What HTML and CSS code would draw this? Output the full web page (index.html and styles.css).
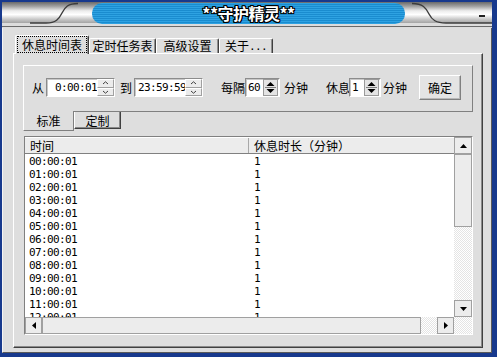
FILE: index.html
```html
<!DOCTYPE html>
<html>
<head>
<meta charset="utf-8">
<link rel="stylesheet" href="styles.css">
</head>
<body>
<div class="window">
  <div class="titlebar">
    <svg class="title-art" width="497" height="28" viewBox="0 0 497 28">
      <defs>
        <linearGradient id="metal" x1="0" y1="0" x2="0" y2="1">
          <stop offset="0" stop-color="#6a6a6a"/>
          <stop offset="0.22" stop-color="#a6a6a6"/>
          <stop offset="0.42" stop-color="#ececec"/>
          <stop offset="0.6" stop-color="#ffffff"/>
          <stop offset="0.82" stop-color="#c8c8c8"/>
          <stop offset="1" stop-color="#a4a4a4"/>
        </linearGradient>
        <pattern id="stripes" width="4" height="2" patternUnits="userSpaceOnUse">
          <rect width="4" height="1" fill="#1a8ccf"/>
          <rect y="1" width="4" height="1" fill="#2ea2e2"/>
        </pattern>
      </defs>
      <rect width="497" height="28" fill="#dcdcdc"/>
      <rect x="0" y="2" width="497" height="21" fill="url(#metal)"/>
      <rect x="0" y="26" width="497" height="1" fill="#6a6a6a"/>
      <rect x="92" y="3" width="313" height="21" rx="10" ry="10" fill="url(#stripes)"/>
      <path d="M30,23 L46,23 C56,23 59,19 62,13 C65,7 68,3.5 78,3.5" fill="none" stroke="#3c3c3c" stroke-width="1.4"/>
      <path d="M412,3.5 C423,3.5 426,8 429,14 C432,20 436,23 446,23 L492,23" fill="none" stroke="#3c3c3c" stroke-width="1.4"/>
      <rect x="479" y="15" width="6" height="2" fill="#202020"/>
      <rect x="0" y="0" width="497" height="2" fill="#17398d"/>
      <rect x="0" y="0" width="2" height="28" fill="#17398d"/>
      <rect x="492" y="0" width="5" height="28" fill="#17398d"/>
    </svg>
    <span class="title-text">**守护精灵**</span>
  </div>
  <div class="client">
    <div class="tabs">
      <div class="tab active w1"><span class="focus">休息时间表</span></div>
      <div class="tab w2">定时任务表</div>
      <div class="tab w3">高级设置</div>
      <div class="tab w4">关于<span class="mono">...</span></div>
    </div>
    <div class="panel">
      <div class="settings">
        <span class="lbl">从</span>
        <div class="edit e1">
          <span class="val right mono">0:00:01</span>
          <div class="updown">
            <span class="ud"><svg width="7" height="4" viewBox="0 0 7 4"><polyline points="1,3 3.5,0.8 6,3" fill="none" stroke="#404040" stroke-width="1"/></svg></span>
            <span class="ud"><svg width="7" height="4" viewBox="0 0 7 4"><polyline points="1,1 3.5,3.2 6,1" fill="none" stroke="#404040" stroke-width="1"/></svg></span>
          </div>
        </div>
        <span class="lbl m5">到</span>
        <div class="edit e2">
          <span class="val left clip mono">23:59:59</span>
          <div class="updown">
            <span class="ud"><svg width="7" height="4" viewBox="0 0 7 4"><polyline points="1,3 3.5,0.8 6,3" fill="none" stroke="#404040" stroke-width="1"/></svg></span>
            <span class="ud"><svg width="7" height="4" viewBox="0 0 7 4"><polyline points="1,1 3.5,3.2 6,1" fill="none" stroke="#404040" stroke-width="1"/></svg></span>
          </div>
        </div>
        <span class="lbl m18">每隔</span>
        <div class="edit e3">
          <span class="val left mono">60</span>
          <div class="spin2">
            <svg width="13" height="15" viewBox="0 0 13 15"><polygon points="2.5,6 6.5,2 10.5,6" fill="#000"/><rect x="1" y="7" width="11" height="1" fill="#808080"/><polygon points="2.5,9 6.5,13 10.5,9" fill="#000"/></svg>
          </div>
        </div>
        <span class="lbl m4">分钟</span>
        <span class="lbl m18">休息</span>
        <div class="edit e4">
          <span class="val left mono">1</span>
          <div class="spin2">
            <svg width="13" height="15" viewBox="0 0 13 15"><polygon points="2.5,6 6.5,2 10.5,6" fill="#000"/><rect x="1" y="7" width="11" height="1" fill="#808080"/><polygon points="2.5,9 6.5,13 10.5,9" fill="#000"/></svg>
          </div>
        </div>
        <span class="lbl m2">分钟</span>
        <div class="btn">确定</div>
      </div>
      <div class="subtabs">
        <div class="subtab active">标准</div>
        <div class="subtab">定制</div>
      </div>
      <div class="listview">
        <div class="lv-main">
          <div class="lv-header">
            <div class="hcol c1">时间</div>
            <div class="hcol c2">休息时长（分钟）</div>
          </div>
          <div class="lv-rows">
            <div class="row"><span class="cell c1 mono">00:00:01</span><span class="cell c2 mono">1</span></div>
            <div class="row"><span class="cell c1 mono">01:00:01</span><span class="cell c2 mono">1</span></div>
            <div class="row"><span class="cell c1 mono">02:00:01</span><span class="cell c2 mono">1</span></div>
            <div class="row"><span class="cell c1 mono">03:00:01</span><span class="cell c2 mono">1</span></div>
            <div class="row"><span class="cell c1 mono">04:00:01</span><span class="cell c2 mono">1</span></div>
            <div class="row"><span class="cell c1 mono">05:00:01</span><span class="cell c2 mono">1</span></div>
            <div class="row"><span class="cell c1 mono">06:00:01</span><span class="cell c2 mono">1</span></div>
            <div class="row"><span class="cell c1 mono">07:00:01</span><span class="cell c2 mono">1</span></div>
            <div class="row"><span class="cell c1 mono">08:00:01</span><span class="cell c2 mono">1</span></div>
            <div class="row"><span class="cell c1 mono">09:00:01</span><span class="cell c2 mono">1</span></div>
            <div class="row"><span class="cell c1 mono">10:00:01</span><span class="cell c2 mono">1</span></div>
            <div class="row"><span class="cell c1 mono">11:00:01</span><span class="cell c2 mono">1</span></div>
            <div class="row"><span class="cell c1 mono">12:00:01</span><span class="cell c2 mono">1</span></div>
          </div>
        </div>
        <div class="vscroll">
          <div class="sbtn"><svg width="7" height="4" viewBox="0 0 7 4"><polygon points="0,4 3.5,0 7,4" fill="#000"/></svg></div>
          <div class="thumb v"></div>
          <div class="track"></div>
          <div class="sbtn"><svg width="7" height="4" viewBox="0 0 7 4"><polygon points="0,0 3.5,4 7,0" fill="#000"/></svg></div>
        </div>
        <div class="hscroll">
          <div class="sbtn"><svg width="4" height="7" viewBox="0 0 4 7"><polygon points="4,0 0,3.5 4,7" fill="#000"/></svg></div>
          <div class="thumb h"></div>
          <div class="track"></div>
          <div class="sbtn"><svg width="4" height="7" viewBox="0 0 4 7"><polygon points="0,0 4,3.5 0,7" fill="#000"/></svg></div>
        </div>
        <div class="corner"></div>
      </div>
    </div>
  </div>
</div>
</body>
</html>
```

FILE: styles.css
```css
* { box-sizing: border-box; }
html, body { margin: 0; padding: 0; }
body {
  width: 497px;
  height: 357px;
  overflow: hidden;
  background: #17398d;
  font-family: "Noto Sans CJK SC", "Noto Sans CJK JP", sans-serif;
  font-size: 12px;
  line-height: 1;
  color: #000;
}
.mono {
  font-family: "DejaVu Sans Mono", "Liberation Mono", monospace;
  font-size: 11px;
  letter-spacing: -0.62px;
}
.window {
  width: 497px;
  height: 357px;
  background: #17398d;
  display: flex;
  flex-direction: column;
}
.titlebar {
  position: relative;
  height: 28px;
  flex: none;
  display: flex;
  align-items: center;
  justify-content: center;
}
.title-art { position: absolute; left: 0; top: 0; }
.title-text {
  position: relative;
  color: #fff;
  font-weight: 700;
  font-size: 16px;
  line-height: 1;
  margin-top: -3px;
  letter-spacing: -0.5px;
  text-shadow: 1px 0 #000, -1px 0 #000, 0 1px #000, 0 -1px #000, 1px 1px #000, -1px -1px #000, 1px -1px #000, -1px 1px #000;
}
.client {
  margin: 0 5px 4px 2px;
  height: 325px;
  background: #dedede;
  border-left: 1px solid #f4f4f4;
  border-right: 1px solid #5a5a5a;
  border-bottom: 1px solid #5a5a5a;
}
/* top tabs */
.tabs {
  display: flex;
  align-items: flex-end;
  height: 25px;
  padding: 7px 0 0 12px;
}
.tab {
  height: 15px;
  display: flex;
  align-items: center;
  justify-content: center;
  background: #dedede;
  border-top: 1px solid #fff;
  border-left: 1px solid #fff;
  border-right: 1px solid #404040;
  box-shadow: inset -1px 0 #909090;
  border-radius: 2px 2px 0 0;
  white-space: nowrap;
}
.tab.active {
  height: 19px;
  margin-bottom: -1px;
  padding-bottom: 1px;
}
.focus {
  width: 68px;
  height: 15px;
  outline: 1px dotted #000;
  display: flex;
  align-items: center;
  justify-content: center;
}
.w1 { width: 74px; }
.w2 { width: 67px; }
.w3 { width: 63px; }
.w4 { width: 54px; }
/* panel */
.panel {
  margin-left: 10px;
  width: 470px;
  height: 295px;
  border-top: 1px solid #fff;
  border-left: 1px solid #fff;
  border-right: 1px solid #404040;
  border-bottom: 1px solid #404040;
  box-shadow: inset -1px -1px #8a8a8a;
  padding: 11px 0 0 9px;
}
.settings {
  width: 450px;
  height: 47px;
  border-top: 1px solid #fff;
  border-left: 1px solid #fff;
  border-right: 1px solid #808080;
  border-bottom: 1px solid #808080;
  display: flex;
  align-items: center;
  padding: 0 0 2px 8px;
}
.lbl { white-space: nowrap; }
.m2 { margin-left: 2px; }
.m4 { margin-left: 4px; }
.m5 { margin-left: 5px; }
.m18 { margin-left: 18px; }
.edit {
  display: flex;
  height: 19px;
  background: #fff;
  border-top: 1px solid #8c8c8c;
  border-left: 1px solid #8c8c8c;
  border-right: 1px solid #fff;
  border-bottom: 1px solid #fff;
  box-shadow: 1px 1px 0 #c8c8c8 inset;
  overflow: hidden;
}
.val {
  flex: 1;
  display: flex;
  align-items: center;
  overflow: hidden;
  white-space: nowrap;
  min-width: 0;
}
.val.right { justify-content: flex-end; }
.val.left { padding-left: 2px; }
.val.clip { padding-left: 3px; }
.e1 { margin-left: 2px; width: 69px; }
.e2 { margin-left: 2px; width: 69px; }
.e3 { width: 35px; }
.e4 { margin-left: -1px; width: 32px; }
.updown {
  width: 17px;
  display: flex;
  flex-direction: column;
  flex: none;
}
.ud {
  flex: 1;
  display: flex;
  align-items: center;
  justify-content: center;
  background: #ececec;
  border-top: 1px solid #fff;
  border-left: 1px solid #fff;
  border-right: 1px solid #a0a0a0;
  border-bottom: 1px solid #a0a0a0;
}
.spin2 {
  width: 15px;
  flex: none;
  margin: 0 1px 0 0;
  background: #e4e4e4;
  border: 1px solid #9a9a9a;
  display: flex;
  align-items: center;
  justify-content: center;
}
.btn {
  margin-left: 12px;
  width: 42px;
  height: 25px;
  display: flex;
  align-items: center;
  justify-content: center;
  background: #e4e4e4;
  border-top: 1px solid #fff;
  border-left: 1px solid #fff;
  border-right: 1px solid #808080;
  border-bottom: 1px solid #808080;
  box-shadow: inset -1px -1px #b8b8b8;
}
/* sub tabs */
.subtabs {
  display: flex;
  align-items: flex-start;
  margin-top: -1px;
  height: 20px;
}
.subtab {
  width: 47px;
  height: 17px;
  margin-top: 1px;
  padding-top: 1px;
  display: flex;
  align-items: center;
  justify-content: center;
  background: #dedede;
  border-left: 1px solid #fff;
  border-right: 1px solid #404040;
  border-bottom: 1px solid #404040;
  box-shadow: inset -1px -1px #8a8a8a;
}
.subtab.active {
  width: 51px;
  height: 20px;
  margin-top: 0;
  padding-top: 0;
  border-right: 1px solid #808080;
  border-bottom: 1px solid #808080;
  box-shadow: none;
}
/* list view */
.listview {
  margin-top: 5px;
  margin-left: 1px;
  width: 449px;
  height: 199px;
  border-top: 1px solid #808080;
  border-left: 1px solid #808080;
  border-right: 1px solid #fff;
  border-bottom: 1px solid #fff;
  background: #fff;
  display: grid;
  grid-template-columns: 429px 18px;
  grid-template-rows: 180px 17px;
}
.lv-main { overflow: hidden; }
.lv-header {
  display: flex;
  height: 17px;
  background: #ececec;
  border-top: 1px solid #fff;
  border-bottom: 1px solid #808080;
}
.hcol {
  display: flex;
  align-items: center;
  padding-left: 5px;
  white-space: nowrap;
}
.hcol.c1 { width: 224px; border-right: 1px solid #a8a8a8; }
.hcol.c2 { flex: 1; }
.lv-rows { height: 163px; overflow: hidden; }
.row {
  display: flex;
  height: 13px;
  padding-top: 2px;
  align-items: center;
}
.cell.c1 { width: 224px; padding-left: 4px; }
.cell.c2 { padding-left: 5px; }
.vscroll {
  display: flex;
  flex-direction: column;
  background-color: #fff;
}
.hscroll {
  display: flex;
}
.sbtn {
  flex: none;
  width: 17px;
  height: 17px;
  display: flex;
  align-items: center;
  justify-content: center;
  background: #ececec;
  border: 1px solid #a0a0a0;
}
.vscroll .sbtn { width: 18px; }
.thumb {
  background: #ececec;
  border: 1px solid #a0a0a0;
  flex: none;
}
.thumb.v { height: 73px; }
.thumb.h { width: 379px; }
.track {
  flex: 1;
  background-color: #fff;
  background-image: conic-gradient(#e4e4e4 25%, #fff 0 50%, #e4e4e4 0 75%, #fff 0);
  background-size: 2px 2px;
}
.corner {
  background-color: #f0f0f0;
  background-image: conic-gradient(#e4e4e4 25%, #fff 0 50%, #e4e4e4 0 75%, #fff 0);
  background-size: 2px 2px;
}
```
